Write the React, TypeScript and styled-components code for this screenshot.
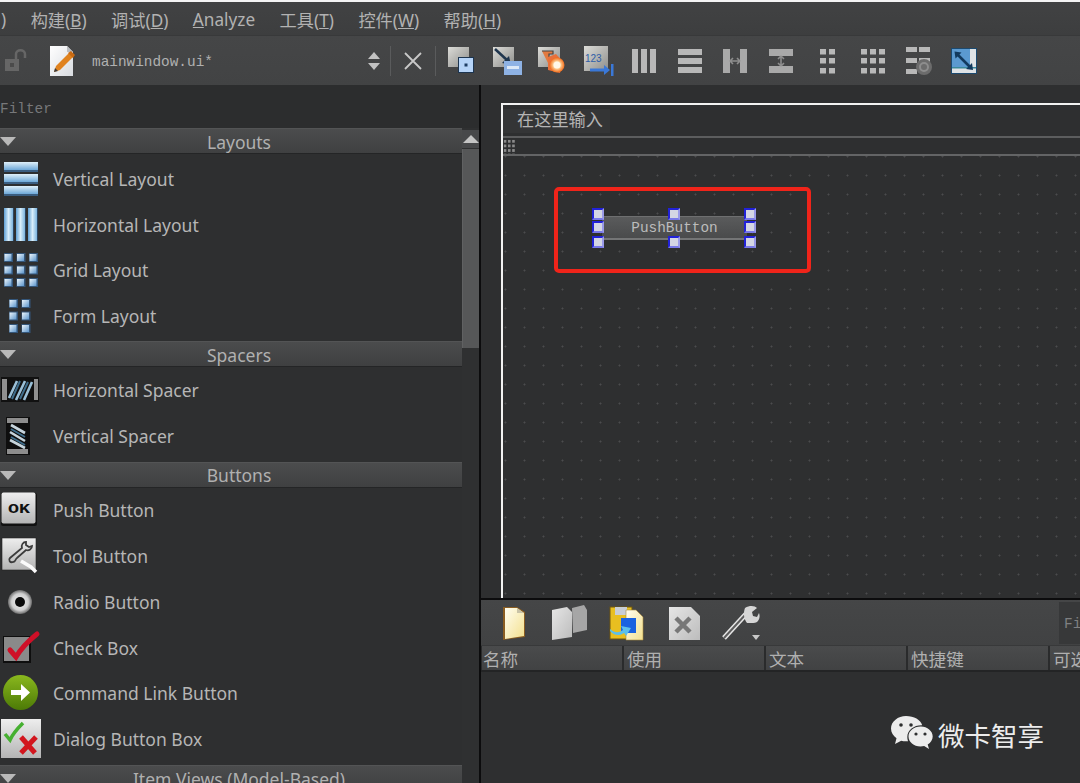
import React from "react";
import styled, { createGlobalStyle } from "styled-components";

const UI = `"Noto Sans", "Noto Sans CJK SC", sans-serif`;
const MONO = `"Liberation Mono", "Noto Sans CJK SC", monospace`;

const Global = createGlobalStyle`
  html, body { margin: 0; padding: 0; background: #2e2f30; }
  * { box-sizing: border-box; }
`;

const Screen = styled.div`
  width: 1080px; height: 783px; overflow: hidden; position: relative;
  display: flex; flex-direction: column; background: #2e2f30; color: #b4b4b4;
  font-family: ${UI};
`;
const TopEdge = styled.div`height: 2px; flex: none; background: #f4f4f4;`;
const MenuBar = styled.div`
  height: 34px; flex: none; display: flex; align-items: center; gap: 24.5px; padding: 2px 0 0 1px;
  background: linear-gradient(#414243, #3d3e3f); border-bottom: 1px solid #38393a;
  font-size: 17.2px; color: #b2b2b2;
`;
const MenuItem = styled.span`white-space: nowrap;`;
const ToolBar = styled.div`
  height: 49px; flex: none; display: flex; align-items: center; padding-left: 3px;
  background: linear-gradient(#454647, #424344);
`;
const Lock = styled.span`width: 26px; height: 26px; flex: none; margin-right: 19px; display: flex;`;
const DocEdit = styled.span`width: 30px; height: 32px; flex: none; margin-right: 14px; display: flex;`;
const DocName = styled.span`
  font: 14.4px ${MONO}; color: #b0b0b0; width: 274px; flex: none; white-space: nowrap; padding-top: 2px;
`;
const Spin = styled.span`width: 16px; flex: none; display: flex;`;
const Sep = styled.span<{ $left: number }>`
  width: 1px; height: 30px; flex: none; background: #5a5b5c; margin-left: ${p => p.$left}px;
`;
const CloseIcon = styled.span`width: 22px; height: 22px; flex: none; margin-left: 11px; display: flex;`;
const ToolIcons = styled.div`display: flex; margin-left: 2px; align-items: center;`;
const ToolSlot = styled.span`
  width: 45.75px; height: 36px; display: flex; align-items: center; justify-content: center; flex: none;
`;
const Body = styled.div`flex: 1; display: flex; min-height: 0;`;
const WidgetBox = styled.aside`
  width: 479px; flex: none; display: flex; flex-direction: column; background: #2e2f30;
`;
const FilterRow = styled.div`
  height: 43px; flex: none; padding: 16px 0 0 0; font: 14.4px ${MONO}; color: #77787a; background: #2c2d2e;
`;
const BoxBody = styled.div`flex: 1; display: flex; min-height: 0;`;
const List = styled.div`width: 462px; flex: none; display: flex; flex-direction: column;`;
const Category = styled.div<{ $top: number; $gap: number }>`
  height: 26px; flex: none; margin: ${p => p.$top}px 0 ${p => p.$gap}px; padding: 1px 0 0 16px; position: relative;
  display: flex; align-items: center; justify-content: center; font-size: 17.5px; color: #b0b0b0; white-space: nowrap;
  background: linear-gradient(#4b4c4d, #3f4041); border-top: 1px solid #535455; border-bottom: 1px solid #242526;
`;
const Caret = styled.span`
  position: absolute; left: 0; top: 8px; width: 0; height: 0;
  border-left: 8px solid transparent; border-right: 8px solid transparent; border-top: 9px solid #b9b9b9;
`;
const Item = styled.div`
  height: 45.75px; flex: none; display: flex; align-items: center; font-size: 17.5px; color: #b6b6b6;
`;
const ItemIcon = styled.span`
  width: 53px; height: 44px; flex: none; display: flex; align-items: center; justify-content: flex-start;
`;
const Bar = styled.div`width: 17px; flex: none; display: flex; flex-direction: column; background: #2f3031; padding-top: 2px;`;
const BarArrow = styled.div`
  height: 18px; flex: none; background: #47484a; display: flex; align-items: center; justify-content: center;
  margin-bottom: 1px;
`;
const BarUp = styled.span`
  width: 0; height: 0; border-left: 8px solid transparent; border-right: 8px solid transparent; border-bottom: 8px solid #c4c4c4;
`;
const BarThumb = styled.div`height: 199px; flex: none; background: #565758; border-left: 1px solid #606162;`;
const Divider = styled.div`width: 2px; flex: none; background: #0c0c0d;`;
const Right = styled.main`flex: 1; display: flex; flex-direction: column; min-width: 0; background: #2e2f30;`;
const FormArea = styled.section`
  height: 515px; flex: none; padding: 18px 0 0 20px; display: flex; border-bottom: 2px solid #0c0c0d; overflow: hidden;
`;
const Form = styled.div`
  flex: 1; display: flex; flex-direction: column; border-left: 2px solid #f2f2f2; border-top: 2px solid #f2f2f2;
`;
const FormMenu = styled.div`
  height: 33px; flex: none; display: flex; align-items: center; border-bottom: 2px solid #5c5d5e;
`;
const FormMenuLabel = styled.span`
  height: 24px; width: 107px; padding-left: 14px; font-size: 17.2px; line-height: 20px; background: #343536; color: #b4b4b4;
  font-family: "Noto Sans CJK SC", sans-serif;
`;
const FormTools = styled.div`
  height: 18px; flex: none; display: flex; align-items: center; border-bottom: 2px solid #636465;
`;
const Grip = styled.span`
  width: 13px; height: 15px; flex: none;
  background-image: radial-gradient(circle at center, #8a8a8a 1.5px, transparent 1.6px);
  background-size: 4.2px 4.6px;
`;
const Canvas = styled.div`
  flex: 1; position: relative;
  background-color: #2e2f30;
  background-image: radial-gradient(circle at center, #4b4c4d 0.9px, transparent 1.1px);
  background-size: 19px 19px; background-position: 12px 10px;
`;
const RedFrame = styled.div`
  position: absolute; left: 51px; top: 31px; width: 257px; height: 86px;
  border: 4px solid #f0241a; border-radius: 5px;
`;
const DesignButton = styled.div`
  position: absolute; left: 99px; top: 60px; width: 145px; height: 24px; padding-top: 1px;
  display: flex; align-items: center; justify-content: center;
  font: 14.4px ${MONO}; color: #bcbcbc; background: linear-gradient(#5a5b5c, #4a4b4c);
  border-top: 1px solid #6e6f70; border-bottom: 2px solid #747576;
`;
const Handle = styled.span<{ $x: number; $y: number }>`
  position: absolute; left: ${p => p.$x}px; top: ${p => p.$y}px; width: 11.5px; height: 11.5px;
  background: #d4d6e4; border: 2px solid #2222d8; border-right-color: #9a9ae8; border-bottom-color: #7a7ae8;
`;
const ActionBar = styled.div`
  height: 46px; flex: none; display: flex; align-items: center; position: relative;
  background: linear-gradient(#454647, #414243); padding-left: 19px; border-bottom: 1px solid #38393a;
`;
const ActionSlot = styled.span<{ $w: number }>`
  width: ${p => p.$w}px; height: 40px; flex: none; display: flex; align-items: center;
`;
const ActionFilter = styled.div`
  position: absolute; left: 578px; top: 2px; width: 30px; height: 42px; background: #373839;
  font: 14.4px ${MONO}; color: #7f8081; padding: 14px 0 0 5px;
`;
const TableHead = styled.div`
  height: 26px; flex: none; display: flex; gap: 2px; padding-left: 1px; background: #2a2b2c; border-bottom: 2px solid #232425;
  font-size: 17.6px; font-family: "Noto Sans CJK SC", sans-serif; color: #b0b0b0;
`;
const HeadCell = styled.div`
  width: 140px; flex: none; height: 24px; padding: 1px 0 0 1px; line-height: 23px; white-space: nowrap; overflow: hidden;
  background: linear-gradient(#4a4b4c, #414243); &:nth-child(n + 2) { padding-left: 3px; }
`;
const Mark = styled.div`
  position: absolute; left: 891px; top: 716px; display: flex; align-items: center; gap: 5px;
  font-size: 26.5px; line-height: 36px; color: #ececec; font-family: "Noto Sans CJK SC", sans-serif;
`;
const Defs = styled.svg`display: block; width: 0; height: 0; flex: none;`;
const Pic = styled.svg`display: block; flex: none;`;

type P = { w: number; h: number; l?: number; children: React.ReactNode };
const Ico = ({ w, h, l = 0, children }: P) => (
  <Pic width={w} height={h} viewBox={`0 0 ${w} ${h}`} style={l ? { marginLeft: l } : undefined}>{children}</Pic>
);

const Grads = () => (
  <Defs>
    <defs>
      <linearGradient id="bh" x1="0" y1="0" x2="0" y2="1"><stop offset="0" stopColor="#dff0fa" /><stop offset="1" stopColor="#5f9fd4" /></linearGradient>
      <linearGradient id="bv" x1="0" y1="0" x2="1" y2="0"><stop offset="0" stopColor="#5f9fd4" /><stop offset=".5" stopColor="#d9eefa" /><stop offset="1" stopColor="#7cb4de" /></linearGradient>
      <linearGradient id="sq" x1="0" y1="0" x2="1" y2="1"><stop offset="0" stopColor="#eef6fb" /><stop offset="1" stopColor="#5b95cc" /></linearGradient>
      <linearGradient id="gr" x1="0" y1="0" x2="0" y2="1"><stop offset="0" stopColor="#eeeeee" /><stop offset="1" stopColor="#b4b4b4" /></linearGradient>
      <linearGradient id="gt" x1="0" y1="0" x2="1" y2="1"><stop offset="0" stopColor="#dcdcd8" /><stop offset="1" stopColor="#8d8d8a" /></linearGradient>
      <linearGradient id="gb" x1="0" y1="0" x2="0" y2="1"><stop offset="0" stopColor="#8ab81e" /><stop offset="1" stopColor="#4c7a06" /></linearGradient>
      <linearGradient id="pg" x1="0" y1="0" x2="1" y2="1"><stop offset="0" stopColor="#ffffff" /><stop offset="1" stopColor="#d8dbe0" /></linearGradient>
      <linearGradient id="yl" x1="0" y1="0" x2="1" y2="1"><stop offset="0" stopColor="#fffdf0" /><stop offset="1" stopColor="#f3e08e" /></linearGradient>
      <linearGradient id="wh" x1="0" y1="0" x2="1" y2="1"><stop offset="0" stopColor="#e6e6e6" /><stop offset="1" stopColor="#bcbcbc" /></linearGradient>
      <radialGradient id="gl"><stop offset="0" stopColor="#fffbe8" /><stop offset=".45" stopColor="#ffd9a0" /><stop offset="1" stopColor="#f06a1a" /></radialGradient>
      <radialGradient id="rd"><stop offset="0" stopColor="#f4f4f4" /><stop offset=".7" stopColor="#cfcfcf" /><stop offset="1" stopColor="#6c6c6c" /></radialGradient>
    </defs>
  </Defs>
);

const VLayout = () => (
  <Ico w={40} h={36} l={3}>
    {[1, 13, 25].map(y => <g key={y}><rect x="1" y={y} width="34" height="9" fill="url(#bh)" /><rect x="1" y={y + 8} width="34" height="2" fill="#3a5d80" /></g>)}
  </Ico>
);
const HLayout = () => (
  <Ico w={40} h={36} l={3}>
    {[1, 13, 25].map(x => <g key={x}><rect x={x} y="1" width="9" height="33" fill="url(#bv)" /><rect x={x + 9} y="1" width="1" height="33" fill="#2d4560" /></g>)}
  </Ico>
);
const Squares = ({ cols, left }: { cols: number; left: number }) => (
  <Ico w={40} h={36} l={left}>
    {[1, 13.5, 26].flatMap(y => Array.from({ length: cols }, (_, i) => (
      <g key={`${y}-${i}`}>
        <rect x={1 + i * 12.5} y={y} width="9" height="9" fill="#34567a" />
        <rect x={1.5 + i * 12.5} y={y + 1} width="7" height="7" fill="url(#sq)" />
      </g>
    )))}
  </Ico>
);
const HSpacer = () => (
  <Ico w={40} h={28} l={1}>
    <rect x="0" y="1" width="38" height="25" fill="#111" />
    <rect x="1" y="3" width="5" height="21" fill="#8f8f8f" /><rect x="33" y="3" width="4" height="21" fill="#8f8f8f" />
    <g stroke="#9ac0d8" strokeWidth="2.6"><path d="M8 22 16 5M15 24 24 5M23 24 31 6" /></g>
    <g stroke="#3e6c8a" strokeWidth="2"><path d="M11 23 19 5M19 23 27 6" /></g>
  </Ico>
);
const VSpacer = () => (
  <Ico w={40} h={40} l={5}>
    <rect x="1" y="1" width="24" height="38" fill="#0e0e0e" />
    <rect x="2" y="2" width="21" height="5" fill="#8d8d8d" /><rect x="2" y="33" width="21" height="5" fill="#8d8d8d" />
    <g stroke="#c6d4dc" strokeWidth="2.6"><path d="M6 9 20 17M5 16 20 25M5 24 20 32" /></g>
    <g stroke="#3e6c8a" strokeWidth="2"><path d="M6 13 20 21M6 21 20 29" /></g>
  </Ico>
);
const PushIcon = () => (
  <Ico w={40} h={36} l={1}>
    <rect x="0" y="1" width="36" height="33" rx="2" fill="#111" />
    <rect x="0.5" y="0.5" width="34" height="31" rx="2" fill="url(#gr)" />
    <text x="7" y="21" fontFamily="Liberation Mono, monospace" fontWeight="700" fontSize="13" textLength="22" lengthAdjust="spacingAndGlyphs" fill="#111">OK</text>
  </Ico>
);
const ToolIcon = () => (
  <Ico w={42} h={38} l={1}>
    <rect x="1" y="1" width="34" height="32" fill="url(#gr)" stroke="#222" strokeWidth="0.6" />
    <path d="M25 5c-3 0-5 3-4 6l-12 10c-2 2 0 5 3 4 3 0 2-3 4-4l9-8c3 1 6-1 6-4l-3 1-3-2z" fill="none" stroke="#3c3c3c" strokeWidth="1.8" />
    <path d="M20 24l10 6 5 5" stroke="#fbfbfb" strokeWidth="3.5" fill="none" />
  </Ico>
);
const RadioIcon = () => (
  <Ico w={40} h={32} l={8}>
    <circle cx="12" cy="16" r="12" fill="url(#rd)" />
    <circle cx="12" cy="16" r="5" fill="#0a0a0a" />
  </Ico>
);
const CheckIcon = () => (
  <Ico w={42} h={36} l={1}>
    <rect x="2" y="6" width="28" height="27" fill="#0e0e0e" />
    <rect x="3" y="7" width="25" height="24" fill="#8a8a8a" />
    <path d="M9 20l6 7c6-10 11-15 21-23" fill="none" stroke="#cf1028" strokeWidth="5" strokeLinecap="round" />
  </Ico>
);
const LinkIcon = () => (
  <Ico w={40} h={38} l={3}>
    <circle cx="17.500" cy="18.500" r="17.500" fill="url(#gb)" />
    <path d="M8 16h10v-6l9 8.500-9 8.500v-6H8z" fill="#fff" />
  </Ico>
);
const DialogIcon = () => (
  <Ico w={42} h={42} l={1}>
    <rect x="0" y="1" width="40" height="39" fill="url(#gr)" />
    <path d="M4 16l5 6c3-7 7-11 13-17" fill="none" stroke="#46b030" strokeWidth="3.500" />
    <path d="M20 19l14 16M35 19 20 35" stroke="#d2161e" strokeWidth="5" />
  </Ico>
);

const Gray = { f: "#b8b8b8" };
const TLayouts = {
  cols: () => <Ico w={26} h={26}>{[1, 10, 19].map(x => <rect key={x} x={x} y="1" width="6" height="24" fill={Gray.f} />)}</Ico>,
  rows: () => <Ico w={26} h={26}>{[1, 10, 19].map(y => <rect key={y} x="1" y={y} width="24" height="6" fill={Gray.f} />)}</Ico>,
  hsplit: () => (
    <Ico w={26} h={26}>
      <path d="M1 1h7v24H1zM18 1h7v24h-7z" fill="#a9a9a9" />
      <path d="M8 13h10M8 13l3-3M8 13l3 3M18 13l-3-3M18 13l-3 3" stroke="#8e8e8e" strokeWidth="1.600" fill="none" />
    </Ico>
  ),
  vsplit: () => (
    <Ico w={26} h={26}>
      <path d="M1 1h24v7H1zM1 18h24v7H1z" fill="#a9a9a9" />
      <path d="M13 8v10M13 8l-3 3M13 8l3 3M13 18l-3-3M13 18l3-3" stroke="#8e8e8e" strokeWidth="1.600" fill="none" />
    </Ico>
  ),
  form: () => <Ico w={26} h={26}>{[1, 10, 20].flatMap(y => [6, 15].map(x => <rect key={`${x}${y}`} x={x} y={y} width="6" height="5.500" fill={Gray.f} />))}</Ico>,
  grid: () => <Ico w={26} h={26}>{[1, 10, 20].flatMap(y => [1, 10, 19].map(x => <rect key={`${x}${y}`} x={x} y={y} width="6" height="5.500" fill={Gray.f} />))}</Ico>,
  lay: () => (
    <Ico w={30} h={32}>
      {[2, 13, 24].map(y => <g key={y}><rect x="3" y={y} width="11" height="5" fill={Gray.f} />{y < 20 && <rect x="16" y={y} width="11" height="5" fill={Gray.f} />}</g>)}
      <circle cx="21" cy="22" r="8" fill="#6c6c6c" /><circle cx="21" cy="22" r="4" fill="none" stroke="#8d8d8d" strokeWidth="2" />
    </Ico>
  ),
  adjust: () => (
    <Ico w={28} h={28}>
      <rect x="1" y="1" width="26" height="26" fill="#1c4a70" />
      <rect x="2" y="2" width="24" height="24" fill="#5b9ad0" />
      <path d="M20 2h6v18h-6zM2 20h24v6H2z" fill="#dfe3e6" />
      <path d="M2 20h24v1.500H2z" fill="#3b8a9c" />
      <path d="M6 6l15 15" stroke="#123a5e" strokeWidth="2.600" />
      <path d="M4.500 4.500l7 1-6 6zM23 23l-7-1 6-6z" fill="#123a5e" />
    </Ico>
  ),
  widgets: () => (
    <Ico w={30} h={30}>
      <rect x="2" y="1" width="21" height="20" fill="url(#gt)" />
      <rect x="12" y="11" width="16" height="16" fill="#1d3550" />
      <rect x="13" y="12" width="14" height="14" fill="#b6d4f8" />
      <rect x="18.500" y="17.500" width="3" height="3" fill="#1f3e64" />
    </Ico>
  ),
  signals: () => (
    <Ico w={32} h={30}>
      <rect x="2" y="1" width="21" height="20" fill="url(#gt)" />
      <path d="M4 3l13 12" stroke="#20364e" strokeWidth="2.500" /><path d="M20 19l-9-2 7-7z" fill="#20364e" />
      <rect x="13" y="15" width="18" height="14" fill="#8eb2e4" />
      <rect x="16" y="20" width="12" height="3" fill="#dce8f6" />
    </Ico>
  ),
  buddy: () => (
    <Ico w={32} h={30}>
      <rect x="2" y="1" width="22" height="20" fill="url(#gt)" />
      <path d="M6 5h11v3H13v11" fill="#e27a40" stroke="#444" strokeWidth="1.200" />
      <path d="M12 11l8-3 7 8-3 11-12-3z" fill="#e8703a" />
      <circle cx="21" cy="19" r="7.500" fill="url(#gl)" />
      <circle cx="21" cy="19" r="3.500" fill="#fff8e8" />
    </Ico>
  ),
  tab: () => (
    <Ico w={32} h={32}>
      <rect x="2" y="1" width="24" height="25" fill="url(#gt)" />
      <text x="3" y="17" fontFamily="Liberation Sans, sans-serif" fontSize="10" fill="#2f5ea8">123</text>
      <path d="M8 25h18" stroke="#3a78d8" strokeWidth="3" />
      <path d="M22 20l6 5-6 5z" fill="#3a78d8" />
      <rect x="29" y="19" width="2.500" height="12" fill="#3a78d8" />
    </Ico>
  ),
};

const Folder = {
  doc: () => (
    <Ico w={30} h={38}>
      <path d="M3 3h14l8 5v25L3 36z" fill="#8a5d22" />
      <path d="M5 4h12l7 5v23L5 35z" fill="url(#yl)" />
      <path d="M17 4v5h7z" fill="#c9c3a8" />
    </Ico>
  ),
  docs: () => (
    <Ico w={40} h={38}>
      <path d="M22 4l12-3 3 5v20l-14 3z" fill="#a6a6a6" />
      <path d="M2 6l15-3 5 5v25L2 36z" fill="url(#wh)" />
    </Ico>
  ),
  save: () => (
    <Ico w={36} h={38}>
      <rect x="1" y="3" width="22" height="32" fill="#e8bf20" stroke="#6d5510" />
      <rect x="6" y="3" width="12" height="8" fill="#c8cdd4" />
      <path d="M17 6h10l7 7v23H17z" fill="url(#yl)" stroke="#a98a3d" strokeWidth=".6" />
      <rect x="12" y="14" width="15" height="15" fill="#1a62e0" />
      <path d="M1 25c6 5 10 3 13 1l-2-4 10 2-5 8-2-3c-4 3-10 3-14-2z" fill="#5cc0ea" />
    </Ico>
  ),
  del: () => (
    <Ico w={34} h={36}>
      <path d="M1 2h22l9 9v24H1z" fill="url(#wh)" />
      <path d="M8 13l14 14M22 13 8 27" stroke="#777" strokeWidth="4.500" />
    </Ico>
  ),
  wrench: () => (
    <Ico w={44} h={38}>
      <path d="M4 34 26 10" stroke="#e6e6e6" strokeWidth="5" />
      <path d="M4 34 26 10" stroke="#5d5d5d" strokeWidth="2" />
      <path d="M25 4c5-3 10-2 12 0l-5 4 1 4 4 1 2-4c2 5-1 11-7 10l-5 0c-3-4-4-10-2-15z" fill="#d6d6d6" />
      <path d="M32 31h8l-4 5z" fill="#c8c8c8" />
    </Ico>
  ),
};

const Wechat = () => (
  <Ico w={42} h={37}>
    <path d="M15 0C7 0 0 5.500 0 12.500c0 4 2.300 7.500 5.500 9.800L4 28l6.200-3.300c1.400.4 3 .6 4.800.6 1 0 1.300 0 2-.1-.5-1.500-.7-2.800-.7-4.200 0-7 6.700-11.800 14-11.800l.9.100C29.700 3.800 23 0 15 0z" fill="#ececec" />
    <path d="M29.500 10.500C22.800 10.500 17.500 15 17.500 20.500S22.800 30.500 29.500 30.500c1.300 0 2.500-.2 3.700-.5l4.800 3-1.300-4.500c3-1.900 5-4.900 5-8 0-5.500-5.500-10-11.700-10z" fill="#ececec" />
    <circle cx="10" cy="9" r="1.800" fill="#2e2f30" /><circle cx="20" cy="9" r="1.800" fill="#2e2f30" />
    <circle cx="25" cy="18" r="1.600" fill="#2e2f30" /><circle cx="34" cy="18" r="1.600" fill="#2e2f30" />
  </Ico>
);

const sections = [
  { title: "Layouts", top: 0, gap: 2, items: [
    ["Vertical Layout", <VLayout />], ["Horizontal Layout", <HLayout />],
    ["Grid Layout", <Squares cols={3} left={3} />], ["Form Layout", <Squares cols={2} left={8} />],
  ] },
  { title: "Spacers", top: 2, gap: 0, items: [["Horizontal Spacer", <HSpacer />], ["Vertical Spacer", <VSpacer />]] },
  { title: "Buttons", top: 3, gap: 0, items: [
    ["Push Button", <PushIcon />], ["Tool Button", <ToolIcon />], ["Radio Button", <RadioIcon />],
    ["Check Box", <CheckIcon />], ["Command Link Button", <LinkIcon />], ["Dialog Button Box", <DialogIcon />],
  ] },
] as const;

const handles = [
  [89, 52], [89, 65], [89, 80], [165, 52], [165, 80], [241, 52], [241, 65], [241, 80],
];

export default function App() {
  const tools = [TLayouts.widgets, TLayouts.signals, TLayouts.buddy, TLayouts.tab, TLayouts.cols, TLayouts.rows,
    TLayouts.hsplit, TLayouts.vsplit, TLayouts.form, TLayouts.grid, TLayouts.lay, TLayouts.adjust];
  return (
    <Screen>
      <Global />
      <Grads />
      <TopEdge />
      <MenuBar>
        <MenuItem>)</MenuItem>
        <MenuItem>构建(<u>B</u>)</MenuItem>
        <MenuItem>调试(<u>D</u>)</MenuItem>
        <MenuItem><u>A</u>nalyze</MenuItem>
        <MenuItem>工具(<u>T</u>)</MenuItem>
        <MenuItem>控件(<u>W</u>)</MenuItem>
        <MenuItem>帮助(<u>H</u>)</MenuItem>
      </MenuBar>
      <ToolBar>
        <Lock>
          <Ico w={26} h={26}>
            <rect x="2" y="11" width="14" height="12" fill="#666" />
            <rect x="7" y="15" width="4" height="4" fill="#4b4b4b" />
            <path d="M13 11V6c0-5 9-5 9 0v4" fill="none" stroke="#666" strokeWidth="2.500" />
          </Ico>
        </Lock>
        <DocEdit>
          <Ico w={30} h={32}>
            <path d="M2 1h17l6 6v24H2z" fill="url(#pg)" />
            <path d="M19 1v6h6z" fill="#b9bcc0" />
            <path d="M6 27l2-6L21 8l4 4L12 25z" fill="#e0821e" />
            <path d="M20 8l3-2 4 4-2 3z" fill="#c96a12" />
            <path d="M6 27l1-4 3 3z" fill="#3a3a3a" />
          </Ico>
        </DocEdit>
        <DocName>mainwindow.ui*</DocName>
        <Spin>
          <Ico w={16} h={22}>
            <path d="M2 9l6-7 6 7z" fill="#c2c2c2" /><path d="M2 13l6 7 6-7z" fill="#c2c2c2" />
          </Ico>
        </Spin>
        <Sep $left={8} />
        <CloseIcon>
          <Ico w={22} h={22}><path d="M3 3l16 16M19 3 3 19" stroke="#c9c9c9" strokeWidth="1.800" /></Ico>
        </CloseIcon>
        <Sep $left={11} />
        <ToolIcons>
          {tools.map((T, i) => <ToolSlot key={i}><T /></ToolSlot>)}
        </ToolIcons>
      </ToolBar>
      <Body>
        <WidgetBox>
          <FilterRow>Filter</FilterRow>
          <BoxBody>
            <List>
              {sections.map(s => (
                <React.Fragment key={s.title}>
                  <Category $top={s.top} $gap={s.gap}><Caret />{s.title}</Category>
                  {s.items.map(([label, icon]) => (
                    <Item key={label}><ItemIcon>{icon}</ItemIcon>{label}</Item>
                  ))}
                </React.Fragment>
              ))}
              <Category $top={3} $gap={0}><Caret />Item Views (Model-Based)</Category>
            </List>
            <Bar>
              <BarArrow><BarUp /></BarArrow>
              <BarThumb />
            </Bar>
          </BoxBody>
        </WidgetBox>
        <Divider />
        <Right>
          <FormArea>
            <Form>
              <FormMenu><FormMenuLabel>在这里输入</FormMenuLabel></FormMenu>
              <FormTools><Grip /></FormTools>
              <Canvas>
                <RedFrame />
                <DesignButton>PushButton</DesignButton>
                {handles.map(([x, y]) => <Handle key={`${x}-${y}`} $x={x} $y={y} />)}
              </Canvas>
            </Form>
          </FormArea>
          <ActionBar>
            <ActionSlot $w={50}><Folder.doc /></ActionSlot>
            <ActionSlot $w={59}><Folder.docs /></ActionSlot>
            <ActionSlot $w={59}><Folder.save /></ActionSlot>
            <ActionSlot $w={52}><Folder.del /></ActionSlot>
            <ActionSlot $w={50}><Folder.wrench /></ActionSlot>
            <ActionFilter>Fi</ActionFilter>
          </ActionBar>
          <TableHead>
            <HeadCell>名称</HeadCell>
            <HeadCell>使用</HeadCell>
            <HeadCell>文本</HeadCell>
            <HeadCell>快捷键</HeadCell>
            <HeadCell>可选</HeadCell>
          </TableHead>
        </Right>
      </Body>
      <Mark><Wechat />微卡智享</Mark>
    </Screen>
  );
}
